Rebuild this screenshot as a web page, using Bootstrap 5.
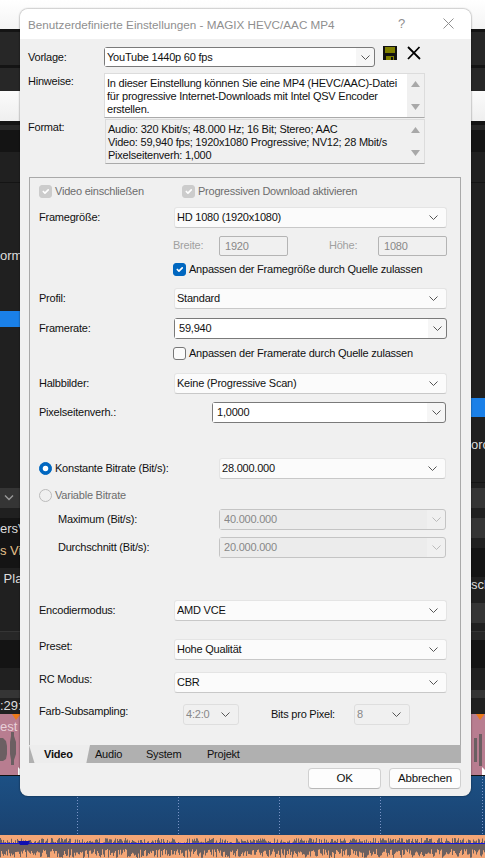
<!DOCTYPE html>
<html lang="de">
<head>
  <meta charset="UTF-8">
  <title>Benutzerdefinierte Einstellungen</title>
  <link href="https://cdn.jsdelivr.net/npm/bootstrap@5.3.0/dist/css/bootstrap.min.css" rel="stylesheet">
  <style>
    html, body { width: 485px; height: 858px; overflow: hidden; }
    body { background: #202020; font-family: "Liberation Sans", Arial, sans-serif; font-size: 11px; letter-spacing: -.22px; color: #111; line-height: 13px; }

    /* app behind the dialog */
    .app-top { height: 29px; background: linear-gradient(#fff, #f4f4f4); }
    .app-mid { height: 746px; }
    .side-l { width: 20px; overflow: hidden; }
    .side-r { width: 14px; overflow: hidden; }
    .band { color: #ddd; font-size: 13px; letter-spacing: 0; line-height: 16px; white-space: nowrap; }
    .b-dk { background: #141414; }
    .b-md { background: #202020; }
    .b-lt { background: #272727; }
    .b-wh { background: linear-gradient(#fbfbfb, #efefef); }
    .b-bl { background: #1a80e8; }
    .b-gr { background: #353535; }
    .b-pk { background: #b87d90; color: #e8d0d8; position: relative; padding-top: 5px; }
    .h1p { height: 1px; } .h3p { height: 3px; } .h4p { height: 4px; } .h5p { height: 5px; } .h8p { height: 8px; }
    .h10p { height: 10px; } .h16p { height: 16px; } .h19p { height: 19px; } .h20p { height: 20px; } .h22p { height: 22px; }
    .h23p { height: 23px; } .h26p { height: 26px; } .h28p { height: 28px; } .h29p { height: 29px; } .h30p { height: 30px; }
    .h33p { height: 33px; } .h37p { height: 37px; } .h45p { height: 45px; } .h61p { height: 61px; } .h128p { height: 128px; }
    .h161p { height: 161px; } .h215p { height: 215px; }
    .side-text { padding-top: 65px; }
    .pad-text { padding-top: 3px; }
    .orange { color: #e6c08a; }
    .clip-art { position: absolute; left: 0; top: 0; }
    .app-low { height: 60px; background: linear-gradient(#1c5084, #1a4270); border-top: 1px solid #111; position: relative; }
    .dots { position: absolute; inset: 0; }
    .app-wave { height: 23px; background: #f4a676; display: block; }

    /* dialog */
    .dlg { position: absolute; left: 20px; top: 9px; width: 451px; height: 787px; background: #f0f0f0; border-radius: 8px; box-shadow: 0 0 2px rgba(0,0,0,.6); overflow: hidden; }
    .dlg-title { height: 30px; background: #fff; color: #8f8f8f; font-size: 11.7px; letter-spacing: 0; padding: 0 8px; }
    .dlg-help { position: absolute; left: 378px; top: 8px; font-size: 13px; color: #8f8f8f; }
    .dlg-close { position: absolute; left: 423px; top: 9px; }
    .head-row { padding-left: 8px; }
    .head-lbl { width: 76px; }
    .vorlage { margin-top: 8px; height: 20px; }
    .hinweis { margin-top: 6px; height: 45px; }
    .format { margin-top: 1px; height: 45px; }
    .hinweis .head-lbl, .format .head-lbl { padding-top: 2px; }
    .note { width: 321px; height: 45px; background: #fff; border: 1px solid #dcdcdc; border-bottom-color: #aaa; padding: 3px 2px; line-height: 13px; }
    .note-gray { background: #f0f0f0; margin-left: 1px; width: 320px; }
    .note-text { flex: 1 1 0; }
    .note-bar { width: 17px; margin: -3px -2px -3px 0; background: #f0f0f0; padding: 7px 0; }
    .tool-ico { margin-left: 8px; margin-top: -8px; }
    .tool-ico-x { margin-left: 10px; }

    .panel { margin: 13px 10px 0 9px; height: 568px; border: 1px solid #a9a9a9; border-bottom: 0; padding: 0 13px 0 9px; }
    .frow { height: 21px; }
    .frow-sm { height: 14px; }
    .m6 { margin-top: 6px; } .m7 { margin-top: 7px; } .m8 { margin-top: 8px; } .m9 { margin-top: 9px; }
    .m11 { margin-top: 11px; } .m12 { margin-top: 12px; } .m13 { margin-top: 13px; }
    .m18 { margin-top: 18px; } .m35 { margin-top: 35px; } .m42 { margin-top: 42px; }
    .lbl { width: 135px; flex: none; }
    .lbl-pix { width: 173px; }
    .lbl-bit { width: 180px; }
    .lbl-sub { width: 180px; padding-left: 19px; }
    .lbl-up { margin-bottom: 7px; }
    .lbl-farb { width: 144px; }
    .lbl-bits { width: 83px; margin-left: 32px; }
    .off { color: #a0a0a0; }
    .off-dk { color: #6d6d6d; }
    .indent { margin-left: 134px; }
    .first-check { width: 143px; flex: none; }

    .form-select.dd { height: 21px; flex: 1 1 0; padding: 0 20px 0 2px; font-size: 11px; letter-spacing: -.22px; line-height: 19px; color: #111; background-color: #fbfbfb; border: 1px solid #e4e4e4; border-bottom-color: #c8c8c8; border-radius: 3px; box-shadow: none; background-position: right 8px center; background-size: 9px 5px; background-image: url("data:image/svg+xml,%3csvg xmlns='http://www.w3.org/2000/svg' viewBox='0 0 9 5'%3e%3cpath fill='none' stroke='%23555' d='M.5.5l4 4 4-4'/%3e%3c/svg%3e"); }
    .form-select.dd:disabled { background-color: #f0f0f0; color: #888; border-color: #dedede; opacity: 1; }
    .form-select.dd.tiny { flex: none; width: 56px; }
    .end1 { margin-right: 1px; }

    .combo { height: 21px; flex: 1 1 0; border: 1px solid #7a7a7a; border-radius: 3px; background: #f6f6f6; }
    .combo-off { border-color: #c4c4c4; background: #f0f0f0; }
    .combo .form-control { height: 19px; min-height: 0; border: 0; border-radius: 0; padding: 0 4px; font-size: 11px; letter-spacing: -.22px; line-height: 19px; color: #111; background: #fff; box-shadow: none; width: auto; flex: 1 1 0; min-width: 0; }
    .combo-off .form-control { background: #ececec; color: #888; }
    .combo-btn { width: 18px; flex: none; }
    .vorlage .combo { width: 271px; flex: none; height: 20px; }
    .vorlage .combo .form-control { padding-left: 2px; height: 18px; }

    .num { width: 69px; height: 20px; border: 1px solid #b4b4b4; border-radius: 2px; background: #f0f0f0; color: #888; padding: 0 5px; font-size: 11px; letter-spacing: -.22px; }
    .lbl-breite { width: 46px; }
    .lbl-hoehe { width: 49px; margin-left: 41px; }

    .form-check-input.tick { width: 13px; height: 13px; margin: 0 3px 0 0; flex: none; border: 1px solid #777; border-radius: 3px; background-color: #fbfbfb; box-shadow: none; }
    .form-check-input.tick:checked { background-color: #0067c0; border-color: #0067c0; }
    .form-check-input.tick:disabled { opacity: 1; background-color: #ccc; border-color: #ccc; }
    .form-check-input.tick.rad { border-radius: 50%; }
    .form-check-input.tick.rad:disabled { background-color: #f0f0f0; border-color: #bbb; }

    .tabstrip { margin: 0 10px 0 9px; height: 18px; background: #b0b0b0; }
    .tabitem { font-size: 11px; line-height: 18px; color: #111; padding: 0; text-decoration: none; }
    .tabitem.active { font-weight: 700; background: #ededed; width: 61px; padding-left: 15px; clip-path: polygon(0 0, 100% 0, 94% 100%, 9% 100%); }
    .tabitem.t-audio { margin-left: 5px; width: 51px; }
    .tabitem.t-system { width: 61px; }
    .foot { margin: 5px 10px 0 0; gap: 8px; }
    .btn.dlg-btn { height: 21px; padding: 0; font-size: 11.5px; letter-spacing: -.2px; line-height: 19px; color: #111; background: #fdfdfd; border: 1px solid #d0d0d0; border-bottom-color: #b8b8b8; border-radius: 4px; }
    .btn-ok { width: 73px; }
    .btn-cancel { width: 72px; }
  </style>
</head>
<body>
  <!-- the editor behind the dialog -->
  <div class="app-top"></div>
  <div class="app-mid d-flex justify-content-between">
    <div class="side-l">
      <div class="b-dk h3p"></div><div class="b-lt h33p"></div><div class="b-dk h3p"></div><div class="b-lt h23p"></div>
      <div class="b-wh h30p"></div><div class="b-dk h4p"></div><div class="b-lt h5p"></div><div class="b-dk h22p"></div>
      <div class="b-md h30p"></div><div class="b-dk h1p"></div>
      <div class="b-md h128p band side-text">orma</div>
      <div class="b-bl h16p"></div>
      <div class="b-md h161p"></div>
      <div class="b-gr h20p d-flex align-items-center"><svg width="18" height="8"><path d="M5 1.500l4 4 4-4" fill="none" stroke="#999" stroke-width="1.4"/></svg></div>
      <div class="b-md h10p"></div>
      <div class="b-dk h22p band pad-text">ersV</div>
      <div class="b-dk h28p band orange pad-text">s Vic</div>
      <div class="b-md h26p band pad-text">&nbsp;Plat</div>
      <div class="b-md h37p"></div>
      <div class="b-gr h1p"></div>
      <div class="b-lt h8p"></div>
      <div class="b-dk h28p"></div>
      <div class="b-md h22p"></div>
      <div class="b-gr h8p"></div>
      <div class="b-md band h16p">:29:2</div>
      <div class="b-pk h61p band">
        <svg class="clip-art" width="20" height="61">
          <path d="M0 24h3l3 3 1 5v8l-1 5-3 2H0zM11 18h3v4l2 6v12l-2 6v5h-3v-5l-1-6V28l1-6z" fill="#6b5f62"/>
          <path d="M12 0h8v1l-4 5z" fill="#ee7a1a"/>
          <path d="M18 61v-8l2 2v6z" fill="#fff"/>
        </svg>
        <span class="position-relative">est</span>
      </div>
    </div>
    <div class="side-r">
      <div class="b-dk h3p"></div><div class="b-lt h33p"></div><div class="b-dk h3p"></div><div class="b-lt h23p"></div>
      <div class="b-wh h30p"></div><div class="b-dk h4p"></div><div class="b-lt h5p"></div><div class="b-dk h22p"></div>
      <div class="b-md h30p"></div><div class="b-dk h1p"></div>
      <div class="b-md h215p"></div>
      <div class="b-bl h19p"></div>
      <div class="b-md h20p"></div>
      <div class="b-md band h45p">orc</div>
      <div class="b-dk h1p"></div>
      <div class="b-md h5p"></div>
      <div class="b-gr h20p"></div>
      <div class="b-md h10p"></div>
      <div class="b-gr h20p"></div>
      <div class="b-md h10p"></div>
      <div class="b-dk h29p"></div>
      <div class="b-md band h26p">scl</div>
      <div class="b-gr h20p"></div>
      <div class="b-md h8p"></div>
      <div class="b-gr h1p"></div>
      <div class="b-lt h8p"></div>
      <div class="b-dk h28p"></div>
      <div class="b-md h22p"></div>
      <div class="b-gr h8p"></div>
      <div class="b-md h16p"></div>
      <div class="b-pk h61p">
        <svg class="clip-art" width="14" height="61">
          <path d="M3 24h3v24h-3zM8 20h3v32h-3z" fill="#6b5f62"/>
          <path d="M5 0h8v1l-4 5z" fill="#ee7a1a"/>
          <path d="M11 61v-8l3 3v5z" fill="#fff"/>
        </svg>
      </div>
    </div>
  </div>
  <div class="app-low">
    <svg class="dots" width="485" height="60"><path d="M77.500 0V60M178.500 0V60M279.500 0V60M380.500 0V60M482.500 0V60" stroke="#7b95c8" stroke-dasharray="1 2" fill="none"/></svg>
  </div>
  <svg class="app-wave" id="wave" width="485" height="23"></svg>

  <!-- dialog -->
  <div class="dlg">
    <div class="dlg-title d-flex align-items-center">Benutzerdefinierte Einstellungen - MAGIX HEVC/AAC MP4</div>
    <span class="dlg-help">?</span>
    <svg class="dlg-close" width="11" height="11"><path d="M.5.500l10 10M10.500.500l-10 10" stroke="#8f8f8f" fill="none"/></svg>

    <div class="head-row vorlage d-flex align-items-center">
      <span class="head-lbl">Vorlage:</span>
      <div class="combo d-flex">
        <input class="form-control" readonly value="YouTube 1440p 60 fps">
        <span class="combo-btn d-flex align-items-center justify-content-center"><svg width="9" height="5"><path d="M.5.500l4 4 4-4" fill="none" stroke="#555"/></svg></span>
      </div>
      <svg class="tool-ico" width="14" height="14" viewBox="0 0 14 14"><path d="M0 0h14v14H0z" fill="#111"/><path d="M2 1h10v6H2z" fill="#808000"/><path d="M3 10h8v4H3z" fill="#808000"/><path d="M8 11h2v3H8z" fill="#111"/></svg>
      <svg class="tool-ico tool-ico-x" width="14" height="14" viewBox="0 0 14 14"><path d="M1 1l12 12M12.500 1L1 13" stroke="#000" stroke-width="1.800" fill="none"/></svg>
    </div>
    <div class="head-row hinweis d-flex">
      <span class="head-lbl">Hinweise:</span>
      <div class="note d-flex">
        <div class="note-text">In dieser Einstellung können Sie eine MP4 (HEVC/AAC)-Datei für progressive Internet-Downloads mit Intel QSV Encoder erstellen.</div>
        <div class="note-bar d-flex flex-column justify-content-between align-items-center">
          <svg width="9" height="6"><path d="M4.500 0L9 6H0z" fill="#a8a8a8"/></svg>
          <svg width="9" height="6"><path d="M0 0h9L4.500 6z" fill="#a8a8a8"/></svg>
        </div>
      </div>
    </div>
    <div class="head-row format d-flex">
      <span class="head-lbl">Format:</span>
      <div class="note note-gray d-flex">
        <div class="note-text">Audio: 320 Kbit/s; 48.000 Hz; 16 Bit; Stereo; AAC<br>Video: 59,940 fps; 1920x1080 Progressive; NV12; 28 Mbit/s<br>Pixelseitenverh: 1,000</div>
        <div class="note-bar d-flex flex-column justify-content-between align-items-center">
          <svg width="9" height="6"><path d="M4.500 0L9 6H0z" fill="#a8a8a8"/></svg>
          <svg width="9" height="6"><path d="M0 0h9L4.500 6z" fill="#a8a8a8"/></svg>
        </div>
      </div>
    </div>

    <div class="panel">
      <div class="frow-sm m6 d-flex align-items-center off-dk">
        <span class="first-check d-flex align-items-center"><input class="form-check-input tick" type="checkbox" checked disabled><span>Video einschließen</span></span>
        <input class="form-check-input tick" type="checkbox" checked disabled><span>Progressiven Download aktivieren</span>
      </div>
      <div class="frow m9 d-flex align-items-center">
        <span class="lbl">Framegröße:</span>
        <select class="form-select dd"><option>HD 1080 (1920x1080)</option></select>
      </div>
      <div class="frow m7 d-flex align-items-center off">
        <span class="lbl-breite indent">Breite:</span>
        <input class="num" disabled value="1920">
        <span class="lbl-hoehe">Höhe:</span>
        <input class="num" disabled value="1080">
      </div>
      <div class="frow-sm m6 indent d-flex align-items-center">
        <input class="form-check-input tick" type="checkbox" checked><span>Anpassen der Framegröße durch Quelle zulassen</span>
      </div>
      <div class="frow m12 d-flex align-items-center">
        <span class="lbl">Profil:</span>
        <select class="form-select dd"><option>Standard</option></select>
      </div>
      <div class="frow m9 d-flex align-items-center">
        <span class="lbl">Framerate:</span>
        <div class="combo d-flex">
          <input class="form-control" readonly value="59,940">
          <span class="combo-btn d-flex align-items-center justify-content-center"><svg width="9" height="5"><path d="M.5.500l4 4 4-4" fill="none" stroke="#555"/></svg></span>
        </div>
      </div>
      <div class="frow-sm m7 indent d-flex align-items-center">
        <input class="form-check-input tick" type="checkbox"><span>Anpassen der Framerate durch Quelle zulassen</span>
      </div>
      <div class="frow m13 d-flex align-items-center">
        <span class="lbl">Halbbilder:</span>
        <select class="form-select dd"><option>Keine (Progressive Scan)</option></select>
      </div>
      <div class="frow m8 d-flex align-items-center end1">
        <span class="lbl lbl-pix">Pixelseitenverh.:</span>
        <div class="combo d-flex">
          <input class="form-control" readonly value="1,0000">
          <span class="combo-btn d-flex align-items-center justify-content-center"><svg width="9" height="5"><path d="M.5.500l4 4 4-4" fill="none" stroke="#555"/></svg></span>
        </div>
      </div>
      <div class="frow m35 d-flex align-items-center end1">
        <span class="lbl lbl-bit d-flex align-items-center"><input class="form-check-input tick rad" type="radio" name="rate" checked><span>Konstante Bitrate (Bit/s):</span></span>
        <select class="form-select dd"><option>28.000.000</option></select>
      </div>
      <div class="frow-sm m9 d-flex align-items-center off-dk">
        <input class="form-check-input tick rad" type="radio" name="rate" disabled><span>Variable Bitrate</span>
      </div>
      <div class="frow m7 d-flex align-items-center end1">
        <span class="lbl lbl-sub">Maximum (Bit/s):</span>
        <div class="combo combo-off d-flex">
          <input class="form-control" disabled value="40.000.000">
          <span class="combo-btn d-flex align-items-center justify-content-center"><svg width="9" height="5"><path d="M.5.500l4 4 4-4" fill="none" stroke="#bbb"/></svg></span>
        </div>
      </div>
      <div class="frow m7 d-flex align-items-center end1">
        <span class="lbl lbl-sub">Durchschnitt (Bit/s):</span>
        <div class="combo combo-off d-flex">
          <input class="form-control" disabled value="20.000.000">
          <span class="combo-btn d-flex align-items-center justify-content-center"><svg width="9" height="5"><path d="M.5.500l4 4 4-4" fill="none" stroke="#bbb"/></svg></span>
        </div>
      </div>
      <div class="frow m42 d-flex align-items-center">
        <span class="lbl">Encodiermodus:</span>
        <select class="form-select dd"><option>AMD VCE</option></select>
      </div>
      <div class="frow m18 d-flex align-items-center">
        <span class="lbl lbl-up">Preset:</span>
        <select class="form-select dd"><option>Hohe Qualität</option></select>
      </div>
      <div class="frow m12 d-flex align-items-center">
        <span class="lbl lbl-up">RC Modus:</span>
        <select class="form-select dd"><option>CBR</option></select>
      </div>
      <div class="frow m11 d-flex align-items-center">
        <span class="lbl lbl-farb lbl-up">Farb-Subsampling:</span>
        <select class="form-select dd tiny" disabled><option>4:2:0</option></select>
        <span class="lbl-bits">Bits pro Pixel:</span>
        <select class="form-select dd tiny" disabled><option>8</option></select>
      </div>
    </div>

    <div class="tabstrip d-flex">
      <a class="tabitem active">Video</a>
      <a class="tabitem t-audio">Audio</a>
      <a class="tabitem t-system">System</a>
      <a class="tabitem">Projekt</a>
    </div>
    <div class="foot d-flex justify-content-end">
      <button class="btn dlg-btn btn-ok" type="button">OK</button>
      <button class="btn dlg-btn btn-cancel" type="button">Abbrechen</button>
    </div>
  </div>

  <script>
    // audio waveform strip at the bottom of the timeline
    var d = '', seed = 7;
    function rnd() { seed = (seed * 16807) % 2147483647; return seed / 2147483647; }
    for (var x = 0; x < 485; x += 1) {
      var y1 = 3 + rnd() * 6, y2 = 14 + rnd() * 9;
      d += 'M' + x + ' ' + y1.toFixed(1) + 'h1V' + y2.toFixed(1) + 'h-1z';
    }
    document.getElementById('wave').innerHTML =
      '<path d="' + d + '" fill="#6b6060"/>' +
      '<path d="M0 8.500H485" stroke="#1515e0"/>' +
      '<path d="M18 6h12l-2 4h-8z" fill="#1010b0"/>';
  </script>
</body>
</html>
